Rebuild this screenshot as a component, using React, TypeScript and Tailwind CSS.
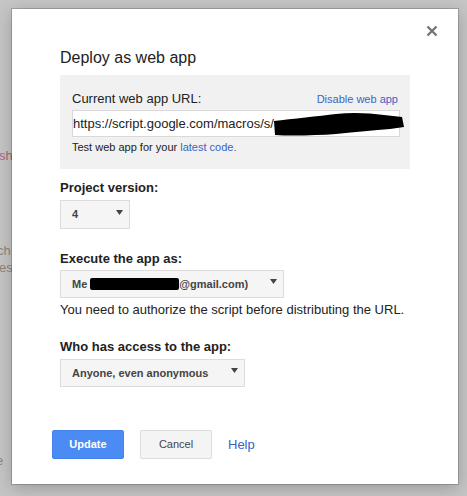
import React from "react";

const Arrow = () => (
  <svg width="7" height="5" viewBox="0 0 7 5" className="mb-[5px] shrink-0">
    <path d="M0 0 L7 0 L3.5 5 Z" fill="#444" />
  </svg>
);

const App = () => {
  return (
    <div
      className="relative w-[467px] h-[496px] overflow-hidden bg-[#c5c5c5] pl-[12px] pt-[9px]"
      style={{ fontFamily: '"Liberation Sans", Arial, sans-serif' }}
    >
      {/* page content behind the overlay */}
      <span className="absolute left-[-1px] top-[146px] text-[13px] text-[#a8687a]">sh</span>
      <span className="absolute left-[-3px] top-[241px] text-[13px] text-[#8e857c]">ch</span>
      <span className="absolute left-[-1px] top-[258px] text-[13px] text-[#8e857c]">es</span>
      <span className="absolute left-[-4px] top-[451px] text-[13px] text-[#9a7f6a]">e</span>

      <div className="relative w-[446px] h-[475px] bg-white shadow-[0_0_0_1px_rgba(0,0,0,0.18),0_4px_16px_rgba(0,0,0,0.22)] pl-[48px] pt-[39px]">
        <button className="absolute right-[20px] top-[16px] w-[12px] h-[12px]">
          <svg width="12" height="12" viewBox="0 0 12 12">
            <path d="M1.5 1.5 L10.5 10.5 M10.5 1.5 L1.5 10.5" stroke="#767676" strokeWidth="2.4" />
          </svg>
        </button>

        <h1 className="text-[16px] leading-[20px] text-[#222]">Deploy as web app</h1>

        <div className="mt-[7px] w-[350px] bg-[#f1f1f1] pl-[12px] pr-[12px] pt-[16px] pb-[15px]">
          <div className="flex justify-between items-baseline h-[16px]">
            <span className="text-[13px] leading-[16px] text-[#222]">Current web app URL:</span>
            <a className="text-[11px] leading-[16px] text-[#3a63c4]">Disable web app</a>
          </div>
          <div className="mt-[3px] h-[27px] w-[328px] bg-white border border-[#d9d9d9] flex items-center overflow-visible whitespace-nowrap">
            <span className="text-[13px] leading-[16px] text-[#222]">https://script.google.com/macros/s/</span>
            <svg width="130" height="25" viewBox="0 0 130 25" className="shrink-0 mt-[1px] overflow-visible">
              <path
                d="M0 9 C 18 7, 45 4, 62 2 C 78 0, 95 1, 110 3 L 128 5 L 130 15 L 116 17 C 100 18, 82 20, 62 22 C 42 23.5, 16 24, 1 23 Z"
                fill="#000"
              />
            </svg>
          </div>
          <p className="mt-[3px] text-[11px] leading-[14px] text-[#222]">
            Test web app for your <a className="text-[#3a63c4]">latest code.</a>
          </p>
        </div>

        <h2 className="mt-[11px] text-[13px] leading-[16px] font-bold text-[#222]">Project version:</h2>
        <div className="mt-[4px] w-[70px] h-[29px] bg-[#f5f5f5] border border-[#dcdcdc] flex items-center justify-between pl-[11px] pr-[6px]">
          <span className="text-[11px] font-bold text-[#444]">4</span>
          <Arrow />
        </div>

        <h2 className="mt-[22px] text-[13px] leading-[16px] font-bold text-[#222]">Execute the app as:</h2>
        <div className="mt-[3px] w-[224px] h-[28px] bg-[#f5f5f5] border border-[#dcdcdc] flex items-center justify-between pl-[11px] pr-[6px]">
          <span className="flex items-center text-[11px] font-bold text-[#444] whitespace-nowrap">
            Me&nbsp;
            <span className="inline-block shrink-0 w-[89px] h-[12px] bg-black rounded-[2px] mt-[-1px]" />
            @gmail.com)
          </span>
          <Arrow />
        </div>
        <p className="mt-[4px] text-[13px] leading-[16px] text-[#222]">
          You need to authorize the script before distributing the URL.
        </p>

        <h2 className="mt-[21px] text-[13px] leading-[16px] font-bold text-[#222]">Who has access to the app:</h2>
        <div className="mt-[4px] w-[185px] h-[28px] bg-[#f5f5f5] border border-[#dcdcdc] flex items-center justify-between pl-[11px] pr-[6px]">
          <span className="text-[11px] font-bold text-[#444]">Anyone, even anonymous</span>
          <Arrow />
        </div>

        <div className="mt-[43px] -ml-[8px] flex items-center gap-[16px]">
          <button className="w-[72px] h-[29px] rounded-[2px] bg-[#4a8cf4] border border-[#4483ec] text-white text-[11px] font-bold">
            Update
          </button>
          <button className="w-[72px] h-[29px] rounded-[2px] bg-[#f4f4f4] border border-[#dcdcdc] text-[#444] text-[11px]">
            Cancel
          </button>
          <a className="text-[13px] text-[#3a63c4]">Help</a>
        </div>
      </div>
    </div>
  );
};

export default App;
